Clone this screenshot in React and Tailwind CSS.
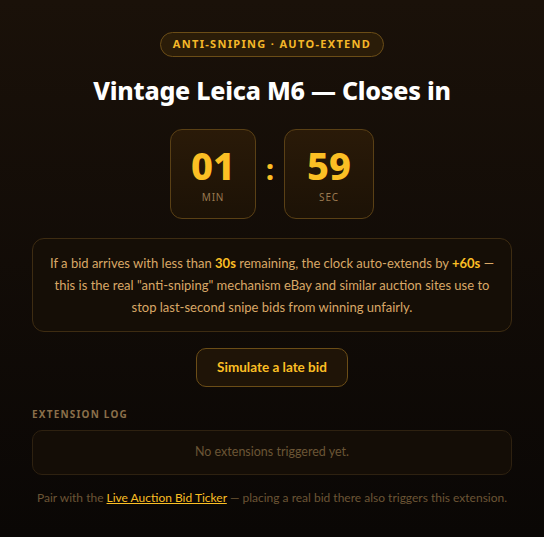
export default function App() {
  return (
    <div
      className="min-h-screen w-full bg-gradient-to-b from-[#1a1109] to-[#0a0705] text-[#d9a866]"
      style={{ fontFamily: '"Noto Sans", "Open Sans", sans-serif' }}
    >
      <div className="mx-auto w-[480px] pt-[32px] pb-6 flex flex-col items-center">
        <div className="h-[25px] px-[12px] flex items-center rounded-full border border-[#6b4d17] bg-[#2a1c08] text-[11px] font-bold tracking-[0.12em] text-[#f5b728]">
          ANTI-SNIPING · AUTO-EXTEND
        </div>

        <h1 className="mt-[16px] text-[25px] leading-[34px] font-extrabold text-white tracking-[-0.01em]">
          Vintage Leica M6 — Closes in
        </h1>

        <div className="mt-[22px] flex items-center gap-[10px]">
          <div className="w-[86px] h-[90px] rounded-[12px] border border-[#5a4015] bg-gradient-to-b from-[#2a1a08] to-[#1c1206] flex flex-col items-center justify-center">
            <div className="text-[38px] leading-[42px] font-extrabold text-[#fbbf24]">01</div>
            <div className="mt-[4px] text-[10px] tracking-[0.08em] text-[#9a7a50]">MIN</div>
          </div>
          <div className="text-[28px] font-extrabold text-[#fbbf24] pb-[10px]">:</div>
          <div className="w-[90px] h-[90px] rounded-[12px] border border-[#5a4015] bg-gradient-to-b from-[#2a1a08] to-[#1c1206] flex flex-col items-center justify-center">
            <div className="text-[38px] leading-[42px] font-extrabold text-[#fbbf24]">59</div>
            <div className="mt-[4px] text-[10px] tracking-[0.08em] text-[#9a7a50]">SEC</div>
          </div>
        </div>

        <div
          className="mt-[19px] w-full rounded-[12px] border border-[#3e2c12] bg-[#150e06] px-[12px] py-[13px] text-center text-[13px] leading-[22px] text-[#d9a866]"
          style={{ fontFamily: 'Lato, "Noto Sans", sans-serif' }}
        >
          If a bid arrives with less than <b className="text-[#fbbf24]">30s</b> remaining, the clock auto-extends by{' '}
          <b className="text-[#fbbf24]">+60s</b> — this is the real "anti-sniping" mechanism eBay and similar auction sites use to stop last-second snipe bids from winning unfairly.
        </div>

        <button
          className="mt-[16px] w-[152px] h-[39px] rounded-[10px] border border-[#6b4d17] bg-[#1f1407] text-[13.5px] font-bold text-[#fbbf24]"
          style={{ fontFamily: 'Lato, "Noto Sans", sans-serif' }}
        >
          Simulate a late bid
        </button>

        <div className="mt-[20px] w-full text-left text-[10px] font-bold tracking-[0.12em] text-[#8a6f4a]">
          EXTENSION LOG
        </div>
        <div
          className="mt-[8px] w-full h-[45px] rounded-[10px] border border-[#2e2110] bg-[#140d06] flex items-center justify-center text-[12.5px] text-[#6b5535]"
          style={{ fontFamily: 'Lato, "Noto Sans", sans-serif' }}
        >
          No extensions triggered yet.
        </div>

        <p
          className="mt-[14px] text-[12px] text-[#6b5535]"
          style={{ fontFamily: 'Lato, "Noto Sans", sans-serif' }}
        >
          Pair with the{' '}
          <a className="text-[#fbbf24] underline" href="#">Live Auction Bid Ticker</a>
          {' '}— placing a real bid there also triggers this extension.
        </p>
      </div>
    </div>
  );
}
